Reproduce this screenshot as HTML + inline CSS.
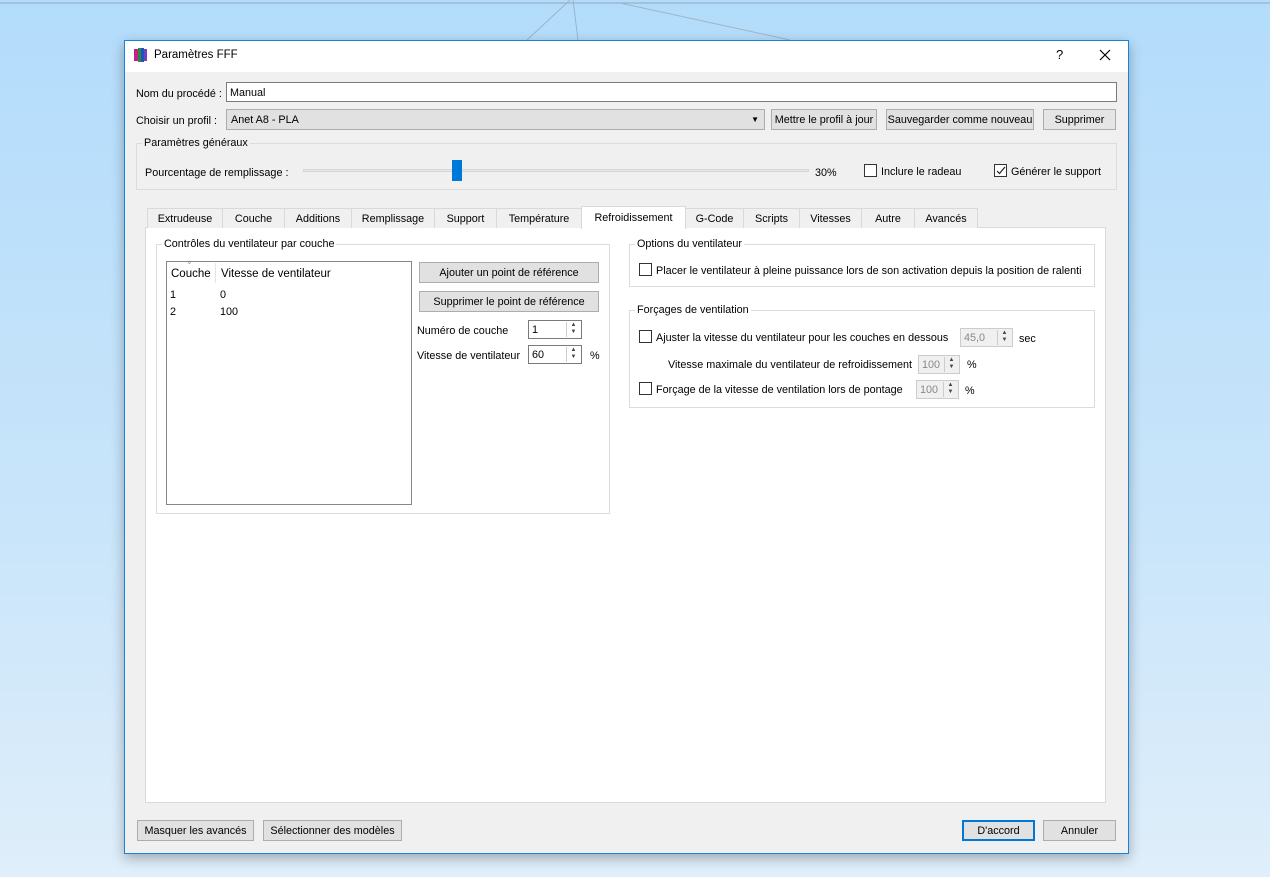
<!DOCTYPE html>
<html><head><meta charset="utf-8">
<style>
*{box-sizing:border-box;margin:0;padding:0}
body{width:1270px;height:877px;overflow:hidden;position:relative;font-family:"Liberation Sans",sans-serif;font-size:10.8px;color:#000;background:linear-gradient(#b3dcfb 0%,#c9e5fa 60%,#dfeefa 100%)}
.a{position:absolute;white-space:nowrap}
.t{position:absolute;white-space:nowrap;margin-top:1px}
.btn{position:absolute;background:#e1e1e1;border:1px solid #adadad;text-align:center;line-height:19px;padding-top:1px;white-space:nowrap;overflow:hidden}
.inp{position:absolute;background:#fff;border:1px solid #7a7a7a;padding-left:3px;line-height:18px;padding-top:1px}
.grp{position:absolute;border:1px solid #dcdcdc}
.gl{position:absolute;top:-8px;left:5px;padding:0 2px;line-height:14px;white-space:nowrap}
.cb{position:absolute;width:13px;height:13px;border:1px solid #333;background:#fff}
.spin{position:absolute;background:#fff;border:1px solid #7a7a7a;line-height:18px;padding-left:3px}
.spin.d{border-color:#ccc;background:#f0f0f0;color:#888}
.spin i{position:absolute;right:1px;top:1px;width:14px;bottom:1px;border-left:1px solid #ccc;font-style:normal;font-size:6px;line-height:7px;text-align:center;color:#444}
.tab{position:absolute;top:208px;height:20px;border:1px solid #d9d9d9;border-bottom:none;background:#f0f0f0;text-align:center;line-height:20px;white-space:nowrap}
</style></head><body>
<svg class="a" style="left:0;top:0" width="1270" height="877"><g stroke="#9fb4c6" stroke-width="1"><line x1="0" y1="3" x2="1270" y2="3" stroke="#8fa8bd"/><line x1="570" y1="0" x2="527" y2="40"/><line x1="573" y1="0" x2="578" y2="40"/><line x1="620" y1="3" x2="790" y2="40"/></g></svg>
<div class="a" style="left:124px;top:40px;width:1005px;height:814px;background:#f0f0f0;border:1px solid #1883d7;box-shadow:0 4px 12px rgba(0,0,0,.3)">
 <div class="a" style="left:0;top:0;width:1003px;height:31px;background:#fff"></div>
</div>
<svg class="a" style="left:134px;top:47px" width="14" height="16"><rect x="0" y="2" width="4" height="12" fill="#c0208a"/><rect x="4" y="1" width="3" height="14" fill="#2a8c3a"/><rect x="7" y="1" width="3" height="14" fill="#2050c8"/><rect x="10" y="2" width="3" height="12" fill="#7040c0"/></svg>
<div class="a" style="left:154px;top:49px;font-size:11.5px">Paramètres FFF</div>
<div class="a" style="left:1056px;top:47px;font-size:13px">?</div>
<svg class="a" style="left:1099px;top:49px" width="12" height="12"><path d="M1 1L11 11M11 1L1 11" stroke="#000" stroke-width="1.2"/></svg>

<div class="t" style="left:136px;top:87px">Nom du procédé :</div>
<div class="inp" style="left:226px;top:82px;width:891px;height:20px">Manual</div>
<div class="t" style="left:136px;top:114px">Choisir un profil :</div>
<div class="a" style="left:226px;top:109px;width:539px;height:21px;background:#e1e1e1;border:1px solid #adadad;padding-left:4px;line-height:20px">Anet A8 - PLA<span style="position:absolute;right:5px;top:0;font-size:8px">▼</span></div>
<div class="btn" style="left:771px;top:109px;width:106px;height:21px">Mettre le profil à jour</div>
<div class="btn" style="left:886px;top:109px;width:148px;height:21px">Sauvegarder comme nouveau</div>
<div class="btn" style="left:1043px;top:109px;width:73px;height:21px;background:#e5e5e5">Supprimer</div>

<div class="grp" style="left:136px;top:143px;width:981px;height:47px"><div class="gl" style="background:#f0f0f0">Paramètres généraux</div></div>
<div class="t" style="left:145px;top:166px">Pourcentage de remplissage :</div>
<div class="a" style="left:303px;top:169px;width:506px;height:3px;background:#e7e7e7;border:1px solid #d6d6d6"></div>
<div class="a" style="left:452px;top:160px;width:10px;height:21px;background:#0078d7"></div>
<div class="t" style="left:815px;top:166px">30%</div>
<div class="cb" style="left:864px;top:164px"></div>
<div class="t" style="left:881px;top:165px">Inclure le radeau</div>
<div class="cb" style="left:994px;top:164px"><svg width="11" height="11" style="position:absolute;left:0;top:0"><path d="M2 6L4.5 8.5L10 2" stroke="#222" fill="none" stroke-width="1.2"/></svg></div>
<div class="t" style="left:1011px;top:165px">Générer le support</div>

<div class="a" style="left:145px;top:227px;width:961px;height:576px;background:#fff;border:1px solid #d9d9d9"></div>
<div class="tab" style="left:147px;width:76px">Extrudeuse</div>
<div class="tab" style="left:222px;width:63px">Couche</div>
<div class="tab" style="left:284px;width:68px">Additions</div>
<div class="tab" style="left:351px;width:84px">Remplissage</div>
<div class="tab" style="left:434px;width:63px">Support</div>
<div class="tab" style="left:496px;width:86px">Température</div>
<div class="tab" style="left:581px;top:206px;height:23px;width:105px;background:#fff;line-height:22px">Refroidissement</div>
<div class="tab" style="left:685px;width:59px">G-Code</div>
<div class="tab" style="left:743px;width:57px">Scripts</div>
<div class="tab" style="left:799px;width:63px">Vitesses</div>
<div class="tab" style="left:861px;width:54px">Autre</div>
<div class="tab" style="left:914px;width:64px">Avancés</div>

<div class="grp" style="left:156px;top:244px;width:454px;height:270px"><div class="gl" style="background:#fff">Contrôles du ventilateur par couche</div></div>
<div class="a" style="left:166px;top:261px;width:246px;height:244px;border:1px solid #828790;background:#fff"></div>
<div class="a" style="left:186px;top:257px;font-size:8px;color:#999">⌄</div>
<div class="a" style="left:215px;top:263px;width:1px;height:20px;background:#e5e5e5"></div>
<div class="t" style="left:171px;top:267px;font-size:11.5px">Couche</div>
<div class="t" style="left:221px;top:267px;font-size:11.5px">Vitesse de ventilateur</div>
<div class="t" style="left:170px;top:288px">1</div><div class="t" style="left:220px;top:288px">0</div>
<div class="t" style="left:170px;top:305px">2</div><div class="t" style="left:220px;top:305px">100</div>
<div class="btn" style="left:419px;top:262px;width:180px;height:21px">Ajouter un point de référence</div>
<div class="btn" style="left:419px;top:291px;width:180px;height:21px">Supprimer le point de référence</div>
<div class="t" style="left:417px;top:324px">Numéro de couche</div>
<div class="spin" style="left:528px;top:320px;width:54px;height:19px">1<i>▲<br>▼</i></div>
<div class="t" style="left:417px;top:349px">Vitesse de ventilateur</div>
<div class="spin" style="left:528px;top:345px;width:54px;height:19px">60<i>▲<br>▼</i></div>
<div class="t" style="left:590px;top:349px">%</div>

<div class="grp" style="left:629px;top:244px;width:466px;height:43px"><div class="gl" style="background:#fff">Options du ventilateur</div></div>
<div class="cb" style="left:639px;top:263px"></div>
<div class="t" style="left:656px;top:264px">Placer le ventilateur à pleine puissance lors de son activation depuis la position de ralenti</div>
<div class="grp" style="left:629px;top:310px;width:466px;height:98px"><div class="gl" style="background:#fff">Forçages de ventilation</div></div>
<div class="cb" style="left:639px;top:330px"></div>
<div class="t" style="left:656px;top:331px">Ajuster la vitesse du ventilateur pour les couches en dessous</div>
<div class="spin d" style="left:960px;top:328px;width:53px;height:19px">45,0<i>▲<br>▼</i></div>
<div class="t" style="left:1019px;top:332px">sec</div>
<div class="t" style="left:668px;top:358px">Vitesse maximale du ventilateur de refroidissement</div>
<div class="spin d" style="left:918px;top:355px;width:42px;height:19px">100<i>▲<br>▼</i></div>
<div class="t" style="left:967px;top:358px">%</div>
<div class="cb" style="left:639px;top:382px"></div>
<div class="t" style="left:656px;top:383px">Forçage de la vitesse de ventilation lors de pontage</div>
<div class="spin d" style="left:916px;top:380px;width:43px;height:19px">100<i>▲<br>▼</i></div>
<div class="t" style="left:965px;top:384px">%</div>

<div class="btn" style="left:137px;top:820px;width:117px;height:21px">Masquer les avancés</div>
<div class="btn" style="left:263px;top:820px;width:139px;height:21px">Sélectionner des modèles</div>
<div class="btn" style="left:962px;top:820px;width:73px;height:21px;border:2px solid #0078d7;line-height:17px">D'accord</div>
<div class="btn" style="left:1043px;top:820px;width:73px;height:21px">Annuler</div>
</body></html>
